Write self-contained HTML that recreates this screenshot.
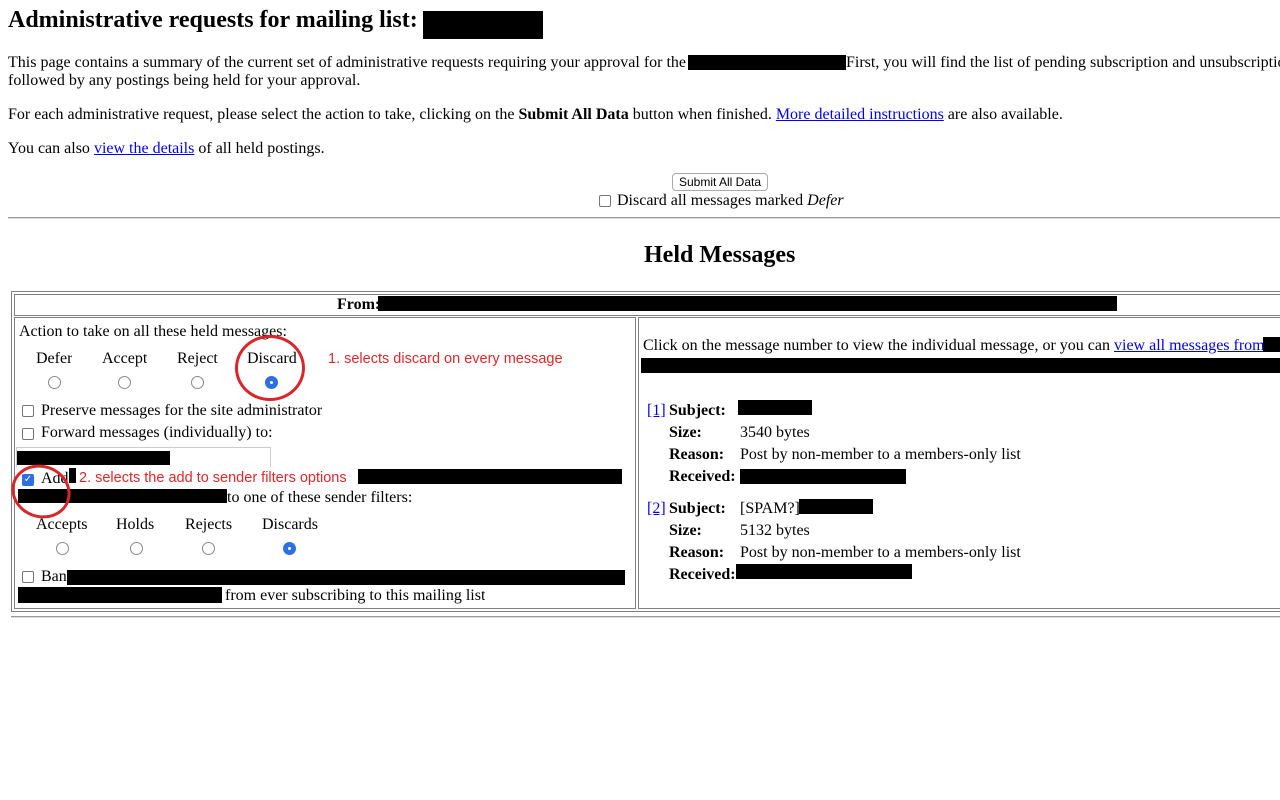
<!DOCTYPE html>
<html><head><meta charset="utf-8"><style>
html,body{margin:0;width:1280px;height:800px;overflow:hidden}
body{background:#fff;font-family:"Liberation Serif",serif;font-size:16px;color:#000;position:relative}
#w{position:absolute;left:0;top:0;width:1280px;height:800px;overflow:hidden}
.t{position:absolute;white-space:nowrap;line-height:18px;overflow:hidden}
.b{position:absolute;background:#000}
a{color:#0000ee;text-decoration:underline}
.cb{position:absolute;width:10px;height:10px;border:1px solid #767676;border-radius:2px;background:#fff}
.cbc{position:absolute;width:12px;height:12px;border-radius:2px;background:#2f6fe4;color:#fff;font:bold 10px "DejaVu Sans",sans-serif;text-align:center;line-height:12px}
.r{position:absolute;width:11px;height:11px;border:1px solid #8a8a8a;border-radius:50%;background:#fff}
.rs{position:absolute;width:13px;height:13px;border-radius:50%;background:#2f6fe4}
.rs:after{content:"";position:absolute;left:5px;top:5px;width:3px;height:3px;border-radius:50%;background:#fff}
.red{position:absolute;white-space:nowrap;color:#e0282b;font-family:"Liberation Sans",sans-serif;font-size:14.5px;line-height:18px}
.box{position:absolute;border:1px solid #808080;border-right:none}
.ring{position:absolute;border:3px solid #d9262a;border-radius:50%}
</style></head><body><div id="w">
<div class="t" style="left:8px;top:6px;font-size:24px;font-weight:bold;line-height:28px">Administrative requests for mailing list:</div>
<div class="b" style="left:423px;top:11px;width:120px;height:28px"></div>

<div class="t" style="left:8px;top:54px">This page contains a summary of the current set of administrative requests requiring your approval for the</div>
<div class="b" style="left:688px;top:55px;width:158px;height:15px"></div>
<div class="t" style="left:846px;top:54px;width:434px">First, you will find the list of pending subscription and unsubscription requests,</div>
<div class="t" style="left:8px;top:72px">followed by any postings being held for your approval.</div>
<div class="t" style="left:8px;top:106px">For each administrative request, please select the action to take, clicking on the <b>Submit All Data</b> button when finished. <a>More detailed instructions</a> are also available.</div>
<div class="t" style="left:8px;top:140px">You can also <a>view the details</a> of all held postings.</div>

<div style="position:absolute;left:672px;top:173px;width:94px;height:16px;border:1px solid #aaa;border-radius:4px;font:12px 'Liberation Sans',sans-serif;text-align:center;line-height:16px;background:#fff">Submit All Data</div>
<div class="cb" style="left:599px;top:195px"></div>
<div class="t" style="left:617px;top:192px">Discard all messages marked <i>Defer</i></div>
<div style="position:absolute;left:8px;top:217px;width:1272px;height:0;border-top:1px solid #999;border-bottom:1px solid #ddd"></div>

<div class="t" style="left:644px;top:241px;font-size:24px;font-weight:bold;line-height:28px">Held Messages</div>

<div class="box" style="left:11px;top:291px;width:1269px;height:319px"></div>
<div class="box" style="left:14px;top:294px;width:1266px;height:20px"></div>
<div class="t" style="left:337px;top:296px;font-weight:bold">From:</div>
<div class="b" style="left:378px;top:296px;width:739px;height:15px"></div>

<div class="box" style="left:14px;top:317px;width:620px;height:290px;border-right:1px solid #808080"></div>
<div class="box" style="left:638px;top:317px;width:642px;height:290px"></div>

<div class="t" style="left:19px;top:323px">Action to take on all these held messages:</div>
<div class="t" style="left:36px;top:350px">Defer</div>
<div class="t" style="left:102px;top:350px">Accept</div>
<div class="t" style="left:177px;top:350px">Reject</div>
<div class="t" style="left:247px;top:350px">Discard</div>
<div class="r" style="left:48px;top:376px"></div>
<div class="r" style="left:118px;top:376px"></div>
<div class="r" style="left:191px;top:376px"></div>
<div class="rs" style="left:265px;top:376px"></div>
<div class="ring" style="left:235px;top:335px;width:64px;height:60px"></div>
<div class="red" style="left:328px;top:350px">1. selects discard on every message</div>

<div class="cb" style="left:22px;top:405px"></div>
<div class="t" style="left:41px;top:402px">Preserve messages for the site administrator</div>
<div class="cb" style="left:22px;top:428px"></div>
<div class="t" style="left:41px;top:424px">Forward messages (individually) to:</div>
<div style="position:absolute;left:16px;top:447px;width:253px;height:19px;border:1px solid #ccc;border-bottom:none"></div>
<div class="b" style="left:17px;top:451px;width:153px;height:14px"></div>

<div class="cbc" style="left:22px;top:474px">✓</div>
<div class="t" style="left:41px;top:470px">Add</div>
<div class="b" style="left:69px;top:468px;width:7px;height:15px"></div>
<div style="position:absolute;left:76px;top:467px;width:282px;height:18px;background:#fff"></div>
<div class="red" style="left:79px;top:469px">2. selects the add to sender filters options</div>
<div class="b" style="left:358px;top:469px;width:264px;height:15px"></div>
<div class="b" style="left:18px;top:489px;width:209px;height:14px"></div>
<div class="t" style="left:227px;top:489px">to one of these sender filters:</div>
<div class="ring" style="left:11px;top:465px;width:54px;height:47px;transform:rotate(20deg)"></div>

<div class="t" style="left:36px;top:516px">Accepts</div>
<div class="t" style="left:116px;top:516px">Holds</div>
<div class="t" style="left:185px;top:516px">Rejects</div>
<div class="t" style="left:262px;top:516px">Discards</div>
<div class="r" style="left:56px;top:542px"></div>
<div class="r" style="left:130px;top:542px"></div>
<div class="r" style="left:202px;top:542px"></div>
<div class="rs" style="left:283px;top:542px"></div>

<div class="cb" style="left:22px;top:571px"></div>
<div class="t" style="left:41px;top:568px">Ban</div>
<div class="b" style="left:67px;top:570px;width:558px;height:15px"></div>
<div class="b" style="left:18px;top:587px;width:204px;height:16px"></div>
<div class="t" style="left:225px;top:587px">from ever subscribing to this mailing list</div>

<div class="t" style="left:643px;top:337px;width:620px">Click on the message number to view the individual message, or you can <a>view all messages from</a></div>
<div class="b" style="left:1263px;top:337px;width:17px;height:15px"></div>
<div class="b" style="left:641px;top:358px;width:639px;height:15px"></div>

<div class="t" style="left:647px;top:402px"><a>[1]</a></div>
<div class="t" style="left:669px;top:402px;font-weight:bold">Subject:</div>
<div class="b" style="left:738px;top:400px;width:74px;height:15px"></div>
<div class="t" style="left:669px;top:424px;font-weight:bold">Size:</div>
<div class="t" style="left:740px;top:424px">3540 bytes</div>
<div class="t" style="left:669px;top:446px;font-weight:bold">Reason:</div>
<div class="t" style="left:740px;top:446px">Post by non-member to a members-only list</div>
<div class="t" style="left:669px;top:468px;font-weight:bold">Received:</div>
<div class="b" style="left:740px;top:469px;width:166px;height:15px"></div>

<div class="t" style="left:647px;top:500px"><a>[2]</a></div>
<div class="t" style="left:669px;top:500px;font-weight:bold">Subject:</div>
<div class="t" style="left:740px;top:500px">[SPAM?]</div>
<div class="b" style="left:799px;top:499px;width:74px;height:15px"></div>
<div class="t" style="left:669px;top:522px;font-weight:bold">Size:</div>
<div class="t" style="left:740px;top:522px">5132 bytes</div>
<div class="t" style="left:669px;top:544px;font-weight:bold">Reason:</div>
<div class="t" style="left:740px;top:544px">Post by non-member to a members-only list</div>
<div class="t" style="left:669px;top:566px;font-weight:bold">Received:</div>
<div class="b" style="left:736px;top:564px;width:176px;height:15px"></div>

<div style="position:absolute;left:11px;top:616px;width:1269px;height:0;border-top:1px solid #999;border-bottom:1px solid #ddd"></div>
</div></body></html>
